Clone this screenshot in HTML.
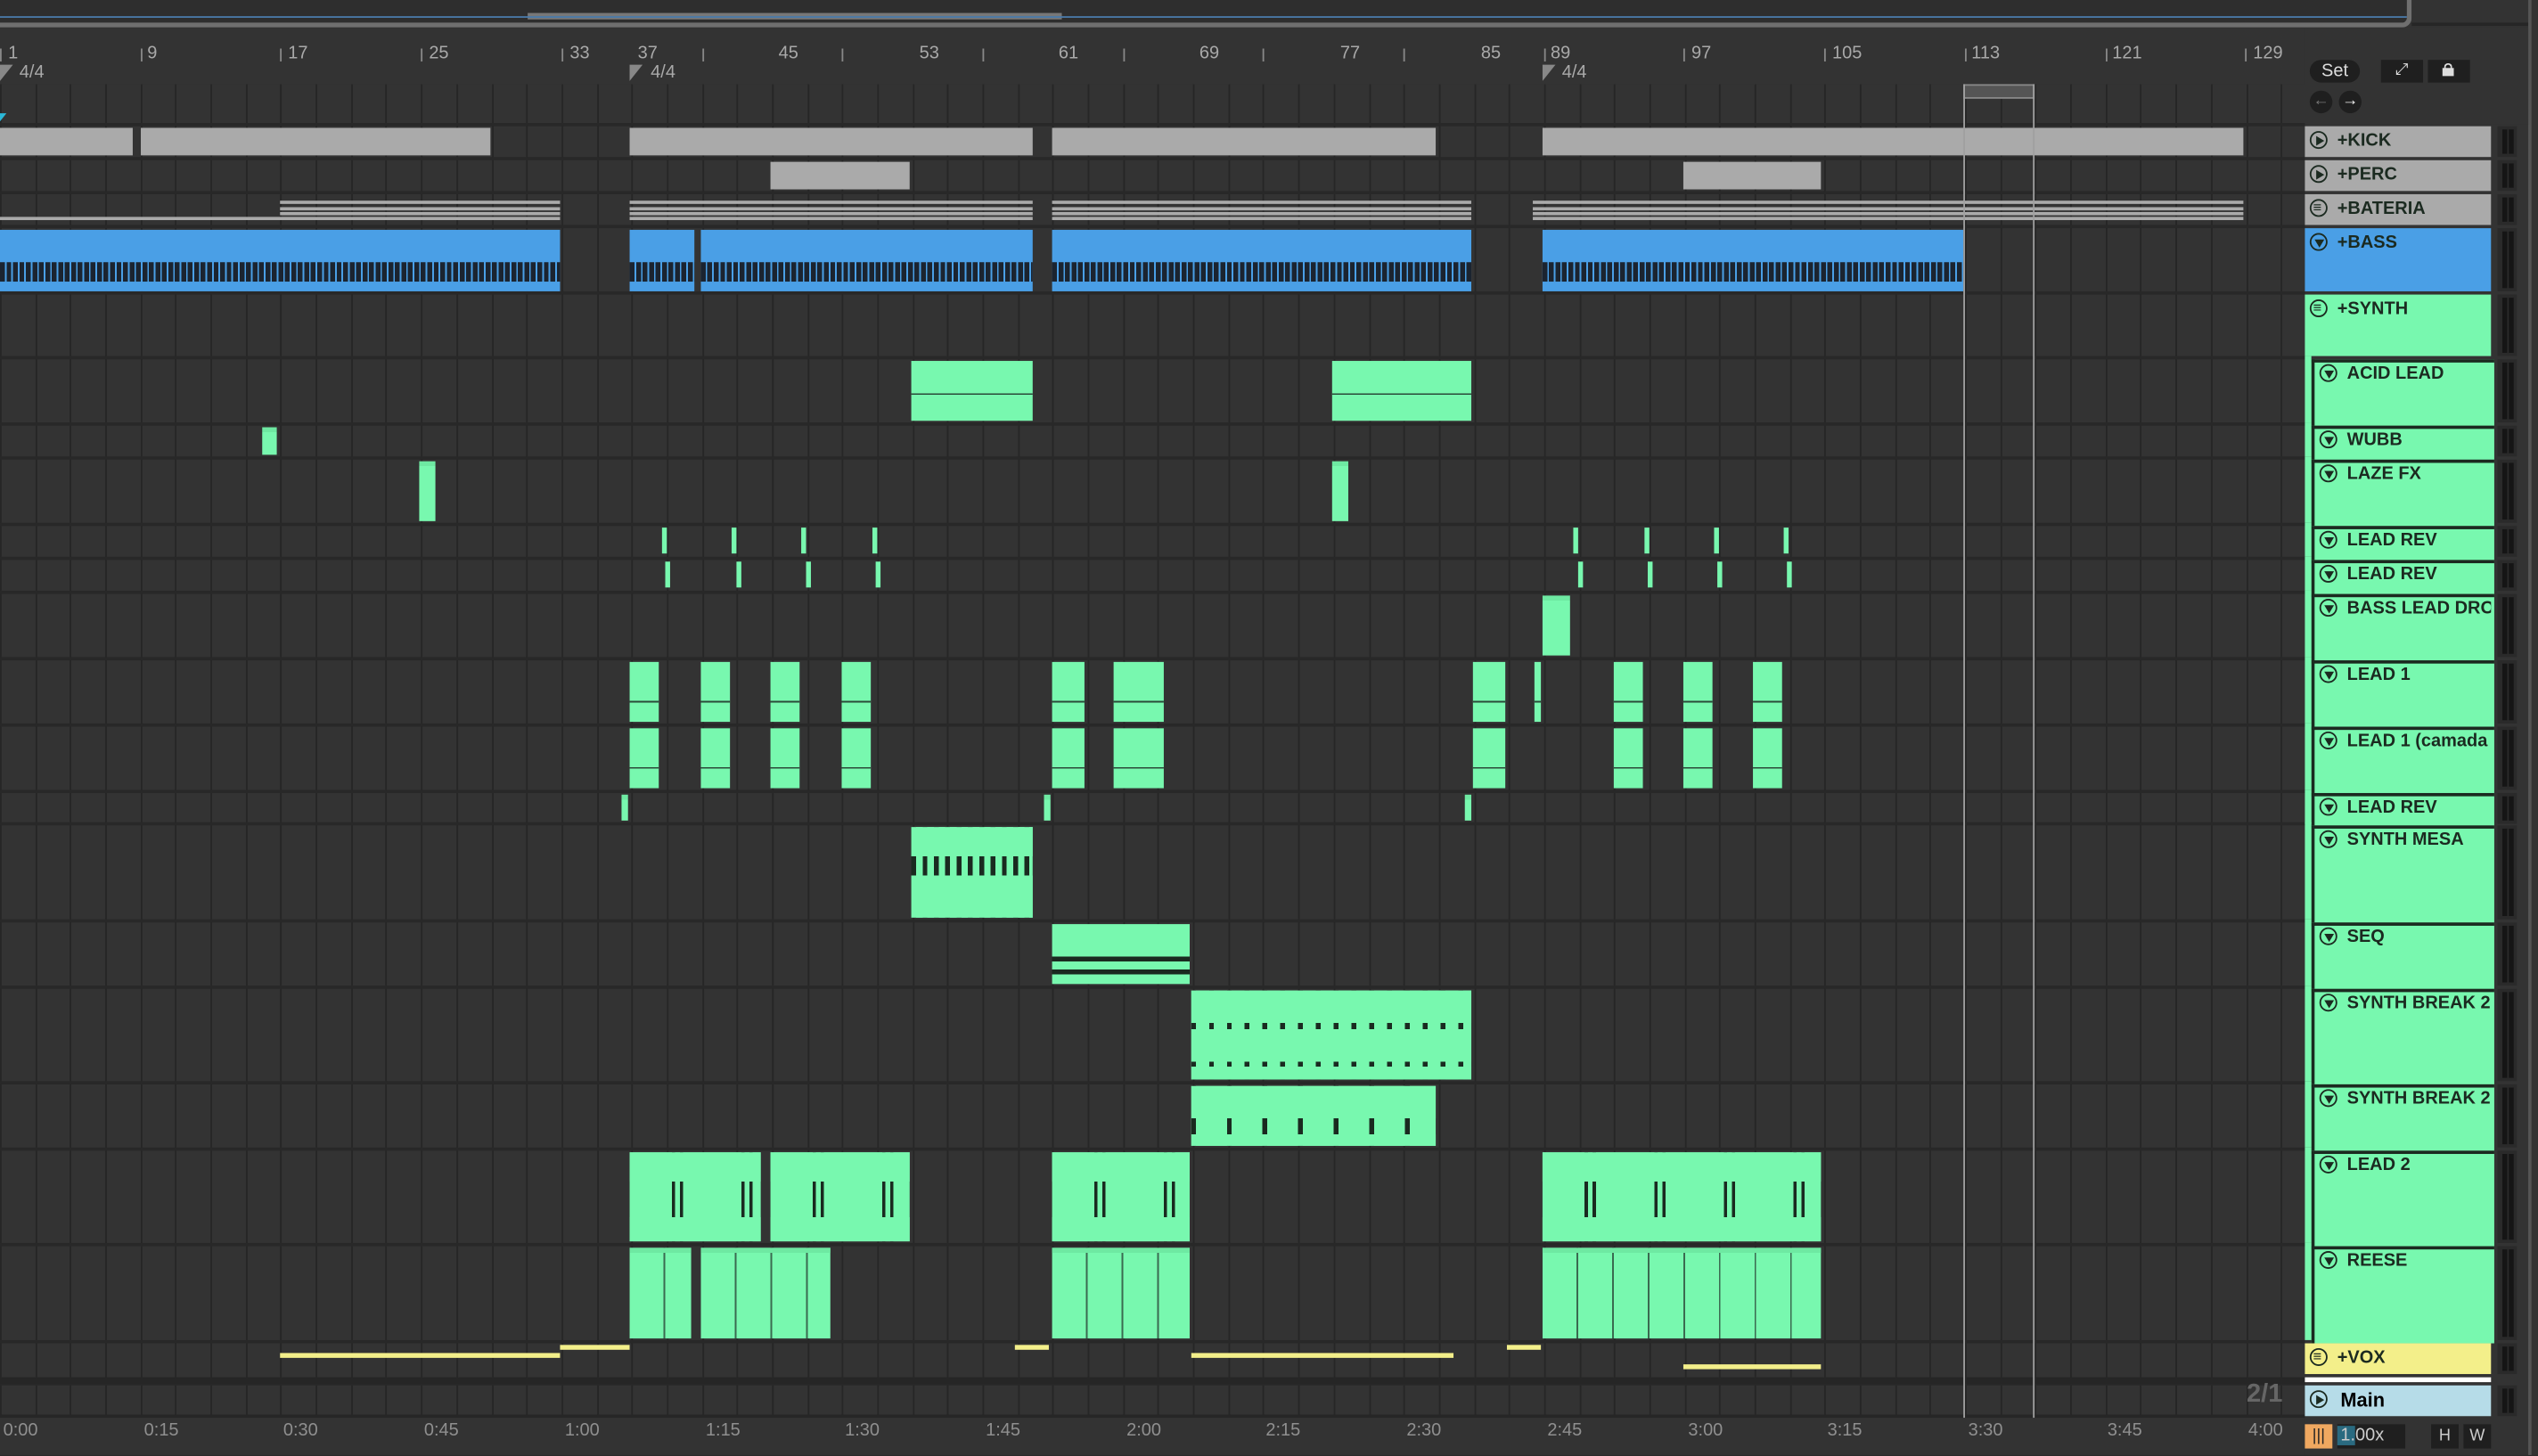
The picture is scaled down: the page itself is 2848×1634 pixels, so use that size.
<!DOCTYPE html>
<html><head><meta charset="utf-8">
<style>
html,body{margin:0;padding:0;background:#2b2b2b;overflow:hidden;width:2848px;height:1634px}
#root{position:absolute;left:0;top:0;width:1568px;height:899px;transform:scale(1.8163);transform-origin:0 0;background:#333;font-family:"Liberation Sans",sans-serif;overflow:hidden}
.a{position:absolute}
.lab{position:absolute;left:1424px;width:115px;font-weight:bold;font-size:11px;color:#1b2a20;box-sizing:border-box;padding-left:20px;line-height:19px;white-space:nowrap;overflow:hidden}
.ic{position:absolute;left:3px;top:3px;width:11px;height:11px;border:1.3px solid #1b2a20;border-radius:50%;box-sizing:border-box}
.ic.play:after{content:"";position:absolute;left:3px;top:2px;border-left:5px solid #1b2a20;border-top:3px solid transparent;border-bottom:3px solid transparent}
.ic.down:after{content:"";position:absolute;left:1.5px;top:3px;border-top:5px solid #1b2a20;border-left:3px solid transparent;border-right:3px solid transparent}
.ic.grp:after{content:"≡";position:absolute;left:1px;top:-5px;font-size:9px;line-height:19px}
.met{position:absolute;left:1543px;width:12px;background:#2a2a2a}
.met:before,.met:after{content:"";position:absolute;top:2px;bottom:2px;width:3px;background:#151515}
.met:before{left:3px}.met:after{left:7px}
.num{position:absolute;top:27px;font-size:11px;color:#a9a9a9}
.tm{position:absolute;top:878px;font-size:11px;color:#8f8f8f}
</style></head><body>
<div id="root">
<div class="a" style="left:0;top:0;width:1487px;height:14px;background:#2e2e2e;border-bottom:3px solid #6f6f6f;border-right:3px solid #6f6f6f;border-radius:0 0 6px 0"></div>
<div class="a" style="left:326px;top:8px;width:330px;height:4px;background:#777"></div>
<div class="a" style="left:0;top:10px;width:1487px;height:1px;background:#4a7aa8"></div>
<div class="a" style="left:1490px;top:0;width:72px;height:14px;background:#333;border-bottom:2px solid #262626"></div>
<div class="a" style="left:1562px;top:0;width:6px;height:900px;background:#333;border-left:2px solid #555"></div>
<div id="arr"></div>
<div class="num" style="left:5px">1</div><div class="num" style="left:91px">9</div><div class="num" style="left:178px">17</div><div class="num" style="left:265px">25</div><div class="num" style="left:352px">33</div><div class="num" style="left:394px">37</div><div class="num" style="left:481px">45</div><div class="num" style="left:568px">53</div><div class="num" style="left:654px">61</div><div class="num" style="left:741px">69</div><div class="num" style="left:828px">77</div><div class="num" style="left:915px">85</div><div class="num" style="left:958px">89</div><div class="num" style="left:1045px">97</div><div class="num" style="left:1132px">105</div><div class="num" style="left:1218px">113</div><div class="num" style="left:1305px">121</div><div class="num" style="left:1392px">129</div>
<div class="num" style="left:12px;top:39px">4/4</div><div class="num" style="left:402px;top:39px">4/4</div><div class="num" style="left:965px;top:39px">4/4</div>
<div class="a" style="left:0;top:40px;border-top:10px solid #888;border-right:8px solid transparent"></div>
<div class="a" style="left:389px;top:40px;border-top:10px solid #888;border-right:8px solid transparent"></div>
<div class="a" style="left:953px;top:40px;border-top:10px solid #888;border-right:8px solid transparent"></div>
<div class="a" style="left:0;top:70px;border-top:5px solid #2bb8d8;border-right:4px solid transparent"></div>
<div class="a" style="left:1213px;top:52px;width:44px;height:9px;background:#555;border:1px solid #888;box-sizing:border-box"></div>
<div class="a" style="left:1213px;top:52px;width:1px;height:824px;background:#a0a0a0"></div>
<div class="a" style="left:1256px;top:52px;width:1px;height:824px;background:#a0a0a0"></div>
<div class="a" style="left:1424px;top:17px;width:138px;height:60px;background:#333"></div>
<div class="a" style="left:1427px;top:37px;width:31px;height:14px;border-radius:8px;background:#1f1f1f;color:#ddd;font-size:11px;text-align:center;line-height:14px">Set</div>
<div class="a" style="left:1471px;top:37px;width:26px;height:14px;background:#1f1f1f;color:#ddd;font-size:10px;text-align:center;line-height:14px">⤢</div>
<div class="a" style="left:1500px;top:37px;width:26px;height:14px;background:#1f1f1f"><div class="a" style="left:9px;top:5px;width:7px;height:5px;background:#ddd"></div><div class="a" style="left:10px;top:2px;width:3px;height:4px;border:1px solid #ddd;border-bottom:none;border-radius:3px 3px 0 0"></div></div>
<div class="a" style="left:1427px;top:56px;width:14px;height:14px;border-radius:50%;background:#1f1f1f;color:#777;font-size:10px;text-align:center;line-height:14px">←</div>
<div class="a" style="left:1445px;top:56px;width:14px;height:14px;border-radius:50%;background:#1f1f1f;color:#eee;font-size:10px;text-align:center;line-height:14px">→</div>
<div id="labs"></div>
<div class="a" style="left:1388px;top:853px;font-size:16px;font-weight:bold;color:#666">2/1</div>
<div class="tm" style="left:2px">0:00</div><div class="tm" style="left:89px">0:15</div><div class="tm" style="left:175px">0:30</div><div class="tm" style="left:262px">0:45</div><div class="tm" style="left:349px">1:00</div><div class="tm" style="left:436px">1:15</div><div class="tm" style="left:522px">1:30</div><div class="tm" style="left:609px">1:45</div><div class="tm" style="left:696px">2:00</div><div class="tm" style="left:782px">2:15</div><div class="tm" style="left:869px">2:30</div><div class="tm" style="left:956px">2:45</div><div class="tm" style="left:1043px">3:00</div><div class="tm" style="left:1129px">3:15</div><div class="tm" style="left:1216px">3:30</div><div class="tm" style="left:1302px">3:45</div><div class="tm" style="left:1389px">4:00</div>
<div class="a" style="left:1424px;top:880px;width:17px;height:15px;background:#f0a860;color:#222;font-size:10px;text-align:center;line-height:15px">|||</div>
<div class="a" style="left:1444px;top:880px;width:42px;height:15px;background:#1f1f1f;color:#ccc;font-size:11px;line-height:15px"><span style="background:#2a6a80;padding:0 0 0 2px">1.</span>00x</div>
<div class="a" style="left:1502px;top:880px;width:17px;height:15px;background:#1f1f1f;color:#ccc;font-size:10px;text-align:center;line-height:15px">H</div>
<div class="a" style="left:1522px;top:880px;width:17px;height:15px;background:#1f1f1f;color:#ccc;font-size:10px;text-align:center;line-height:15px">W</div>
</div>
<script>
var arr=document.getElementById('arr'),labs=document.getElementById('labs');
function d(p,x,y,w,h,c,extra){var e=document.createElement('div');e.className='a';e.style.cssText='left:'+x+'px;top:'+y+'px;width:'+w+'px;height:'+h+'px;background:'+c+';'+(extra||'');p.appendChild(e);return e;}
for(var i=0;i<66;i++){var x=Math.round(i*21.68);d(arr,x,52,1,824,'#262626');}
d(arr,0,17,1424,35,'#333');
for(var i=0;i<17;i++){d(arr,Math.round(i*86.7),30,1,8,'#888');}
var G='#78f8af',B='#4a9fe6',Gr='#aaaaaa',Y='#f3ef8a';
var tr=[
['+KICK',78,19,Gr,'play'],['+PERC',99,19,Gr,'play'],['+BATERIA',120,19,Gr,'grp'],['+BASS',141,39,B,'down'],['+SYNTH',182,38,G,'grp'],
['ACID LEAD',222,39,G,'down',1],['WUBB',263,19,G,'down',1],['LAZE FX',284,39,G,'down',1],['LEAD REV',325,19,G,'down',1],['LEAD REV',346,19,G,'down',1],
['BASS LEAD DRO',367,39,G,'down',1],['LEAD 1',408,39,G,'down',1],['LEAD 1 (camada',449,39,G,'down',1],['LEAD REV',490,19,G,'down',1],['SYNTH MESA',510,58,G,'down',1],
['SEQ',570,39,G,'down',1],['SYNTH BREAK 2',611,57,G,'down',1],['SYNTH BREAK 2',670,39,G,'down',1],['LEAD 2',711,57,G,'down',1],['REESE',770,58,G,'down',1],
['+VOX',830,19,Y,'grp'],['Main',856,19,'#b6dce8','play']];
tr.forEach(function(t){
 d(arr,0,t[1]-2,1424,2,'#282828');
 var l=d(labs,1424,t[1],115,t[2],t[3]);
 if(t[5]){d(labs,1424,t[1]-2,4,t[2]+2,G);l.style.borderLeft='2px solid #1b2a20';l.style.borderTop='2px solid #1b2a20';l.style.left='1428px';l.style.width='111px';}
 var s=document.createElement('div');s.className='lab';s.style.cssText='top:'+t[1]+'px;'+(t[5]?'left:1430px;width:109px;':'')+(t[0]=='Main'?'color:#000;font-size:12px;padding-left:22px':'');
 s.innerHTML='<span class="ic '+t[4]+'"></span>'+t[0];labs.appendChild(s);
 var m=document.createElement('div');m.className='met';m.style.cssText='top:'+t[1]+'px;height:'+t[2]+'px';labs.appendChild(m);
});
d(arr,0,876,1424,24,'#333');d(arr,0,874,1424,2,'#262626');
d(labs,1424,851,115,3,'#fff');d(arr,0,851,1424,4,'#262626');
function clip(x1,x2,y,h,c){return d(arr,x1,y,x2-x1,h,c);}
[[0,82],[87,303],[389,638],[650,887],[953,1386]].forEach(function(a){clip(a[0],a[1],79,17,Gr);});
[[476,562],[1040,1125]].forEach(function(a){clip(a[0],a[1],100,17,Gr);});
[[173,346],[389,638],[650,909],[947,1386]].forEach(function(a){for(var k=0;k<3;k++)clip(a[0],a[1],124+k*3.5,2,Gr);});
clip(0,346,134,2,Gr);clip(389,638,134,2,Gr);clip(650,909,134,2,Gr);clip(947,1386,134,2,Gr);
[[0,346],[389,429],[433,638],[650,909],[953,1213]].forEach(function(a){clip(a[0],a[1],142,38,B);d(arr,a[0],162,a[1]-a[0],12,'#1b2430','background:repeating-linear-gradient(90deg,#1b2430 0 3px,#4a9fe6 3px 4px)');});
var GH='linear-gradient(#6ee9a2 0 3px,#78f8af 3px)';
function gc(a,y,h,pat){a.forEach(function(p){var e=clip(p[0],p[1],y,h,G);e.style.background=pat||GH;});}
gc([[563,638],[823,909]],223,37,'linear-gradient(transparent 0 20px,#2a4a38 20px 21px,transparent 21px),#78f8af');
gc([[162,171]],264,17);gc([[259,269],[823,833]],285,37);
[409,452,495,539,972,1016,1059,1102].forEach(function(x){clip(x,x+3,326,16,G);});
[411,455,498,541,975,1018,1061,1104].forEach(function(x){clip(x,x+3,347,16,G);});
gc([[953,970]],368,37);
var L=[[389,407],[433,451],[476,494],[520,538],[650,670],[688,719],[910,930],[997,1015],[1040,1058],[1083,1101]];
var LP='linear-gradient(transparent 0 24px,#2a4a38 24px 25px,transparent 25px),#78f8af';
gc(L.concat([[948,952]]),409,37,LP);gc(L,450,37,LP);
gc([[384,388],[645,649],[905,909]],491,16);
gc([[563,638]],511,56,'linear-gradient(#78f8af 0 18px,transparent 18px 30px,#78f8af 30px),repeating-linear-gradient(90deg,#1a2a20 0 3px,#78f8af 3px 7px)');
gc([[650,735]],571,37,'linear-gradient(#78f8af 0 20px,#1a2a20 20px 23px,#78f8af 23px 28px,#1a2a20 28px 31px,#78f8af 31px)');
gc([[736,909]],612,55,'linear-gradient(#78f8af 0 20px,transparent 20px 24px,#78f8af 24px 44px,transparent 44px 47px,#78f8af 47px),repeating-linear-gradient(90deg,#1a2a20 0 3px,#78f8af 3px 11px)');
gc([[736,887]],671,37,'linear-gradient(#78f8af 0 20px,transparent 20px 30px,#78f8af 30px),repeating-linear-gradient(90deg,#1a2a20 0 3px,#78f8af 3px 22px)');
var LT='linear-gradient(#78f8af 0 18px,transparent 18px 40px,#78f8af 40px),repeating-linear-gradient(90deg,#78f8af 0 26px,#1a2a20 26px 28px,#78f8af 28px 31px,#1a2a20 31px 33px,#78f8af 33px 43px)';
gc([[389,470],[476,562],[650,735],[953,1125]],712,55,LT);
gc([[389,427],[433,513],[650,735],[953,1125]],771,56,'linear-gradient(#6ee9a2 0 3px,transparent 3px),repeating-linear-gradient(90deg,#78f8af 0 21px,#3a6a50 21px 22px)');
[[173,346,836],[346,389,831],[736,898,836],[1040,1125,843],[931,952,831],[627,648,831]].forEach(function(a){clip(a[0],a[1],a[2],3,Y);});
</script>
</body></html>
